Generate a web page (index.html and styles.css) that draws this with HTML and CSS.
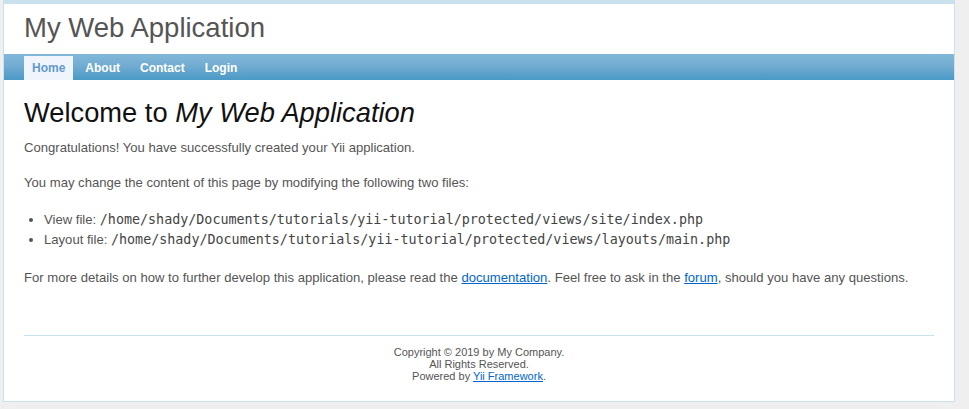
FILE: index.html
```html
<!DOCTYPE html>
<html lang="en">
<head>
<meta charset="utf-8">
<title>My Web Application</title>
<link rel="stylesheet" href="styles.css">
</head>
<body>
<div class="page">
  <div class="header">
    <div class="logo">My Web Application</div>
  </div>
  <div class="mainmenu">
    <ul class="menu">
      <li><a class="menu-link active" href="#">Home</a></li>
      <li><a class="menu-link" href="#">About</a></li>
      <li><a class="menu-link" href="#">Contact</a></li>
      <li><a class="menu-link" href="#">Login</a></li>
    </ul>
  </div>
  <div class="content">
    <h1 class="title">Welcome to <i>My Web Application</i></h1>
    <p class="para">Congratulations! You have successfully created your Yii application.</p>
    <p class="para">You may change the content of this page by modifying the following two files:</p>
    <ul class="files">
      <li class="file">View file: <code class="code">/home/shady/Documents/tutorials/yii-tutorial/protected/views/site/index.php</code></li>
      <li class="file">Layout file: <code class="code">/home/shady/Documents/tutorials/yii-tutorial/protected/views/layouts/main.php</code></li>
    </ul>
    <p class="para">For more details on how to further develop this application, please read the <a class="link" href="#">documentation</a>. Feel free to ask in the <a class="link" href="#">forum</a>, should you have any questions.</p>
  </div>
  <div class="footer">
    Copyright &copy; 2019 by My Company.<br>
    All Rights Reserved.<br>
    Powered by <a class="link" href="#">Yii Framework</a>.
  </div>
</div>
</body>
</html>
```

FILE: styles.css
```css
html, body {
  margin: 0;
  padding: 0;
}
body {
  background: #efefef;
  color: #555;
  font-family: "Liberation Sans", Arial, Helvetica, sans-serif;
  font-size: 13.1px;
  line-height: 15.33px;
}
.page {
  width: 950px;
  margin: 0 0 5px 3px;
  background: #fff;
  border: 1px solid #c9e0ed;
  border-top: 4px solid #c9e0ed;
}
.logo {
  padding: 9px 20px 10px;
  font-size: 27.5px;
  line-height: 30.667px;
  color: #555;
}
.mainmenu {
  height: 26px;
  background: linear-gradient(to bottom, #82b9d9 0%, #72acd1 45%, #4a99c6 100%);
}
.menu {
  list-style: none;
  margin: 0;
  padding: 2px 20px 0;
  display: flex;
  gap: 4px;
}
.menu-link {
  display: block;
  padding: 5px 8px;
  font-size: 12px;
  line-height: 14px;
  font-weight: bold;
  color: #fff;
  text-decoration: none;
}
.menu-link.active {
  color: #6399cd;
  background: #eff5fa;
}
.content {
  padding: 20px;
}
.title {
  margin: 0 0 13.333px;
  font-size: 27.3px;
  line-height: 26.667px;
  font-weight: normal;
  color: #111;
}
.para {
  margin: 0 0 20px;
}
.files {
  margin: 0 0 20px;
  padding-left: 20px;
}
.file {
  line-height: 20px;
}
.code {
  font-family: "DejaVu Sans Mono", monospace;
  font-size: 13.36px;
  line-height: 20px;
  color: #444;
}
.link {
  color: #06c;
  text-decoration: underline;
}
.footer {
  margin: 9px 20px 8px;
  padding: 10px;
  border-top: 1px solid #c9e0ed;
  font-size: 11px;
  line-height: 12.3px;
  text-align: center;
  color: #555;
}
```
